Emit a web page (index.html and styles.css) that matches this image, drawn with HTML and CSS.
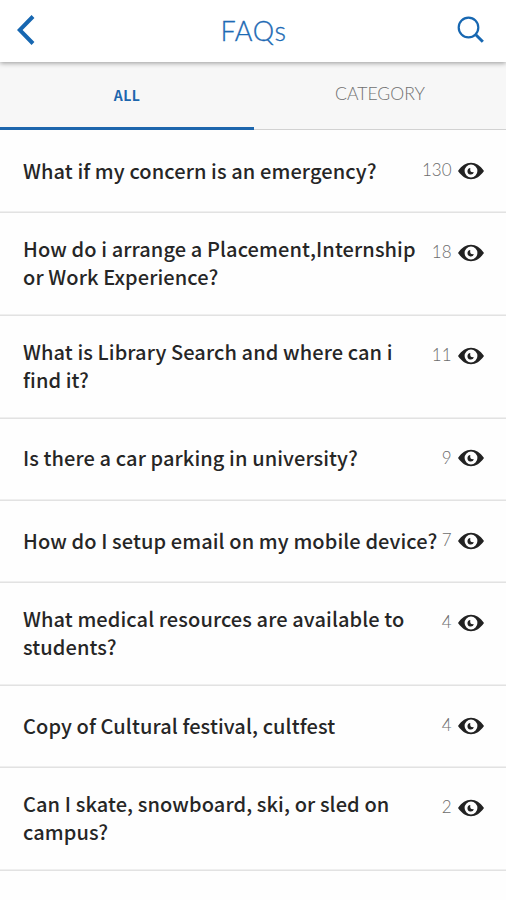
FILE: index.html
```
<!DOCTYPE html>
<html lang="en">
<head>
<meta charset="utf-8">
<title>FAQs</title>
<link rel="stylesheet" href="styles.css">
</head>
<body>
<svg class="defs" aria-hidden="true"><symbol id="eye" viewBox="0 0 26 18"><path fill-rule="evenodd" d="M0 9C4 3.500 8 .8 13 .8S22 3.500 26 9C22 14.500 18 17.200 13 17.200S4 14.500 0 9ZM13 2.600a6.400 6.400 0 1 0 0 12.800a6.400 6.400 0 1 0 0-12.800Z"/><path d="M12.300 5.900a3.300 3.300 0 1 0 3.600 4.300q-2.500.2-3.200-.7q-.8-1.200-.4-3.600Z"/></symbol></svg>
<header class="bar">
<svg class="back" viewBox="0 0 18 30"><path d="M16 1.500 2.700 15 16 28.500"/></svg>
<h1>FAQs</h1>
<svg class="search" viewBox="0 0 28 28"><circle cx="11.500" cy="11.500" r="9.800"/><path class="handle" d="m18.800 18.800 7 7"/></svg>
</header>
<nav class="tabs"><div class="tab active"><span>ALL</span></div><div class="tab"><span>CATEGORY</span></div></nav>
<main>
<div class="row"><p>What if my concern is an emergency?</p><div class="views"><span>130</span><svg><use href="#eye"/></svg></div></div>
<div class="row double"><p>How do i arrange a Placement,Internship<br>or Work Experience?</p><div class="views"><span>18</span><svg><use href="#eye"/></svg></div></div>
<div class="row double"><p>What is Library Search and where can i<br>find it?</p><div class="views"><span>11</span><svg><use href="#eye"/></svg></div></div>
<div class="row"><p>Is there a car parking in university?</p><div class="views"><span>9</span><svg><use href="#eye"/></svg></div></div>
<div class="row"><p>How do I setup email on my mobile device?</p><div class="views"><span>7</span><svg><use href="#eye"/></svg></div></div>
<div class="row double"><p>What medical resources are available to<br>students?</p><div class="views"><span>4</span><svg><use href="#eye"/></svg></div></div>
<div class="row"><p>Copy of Cultural festival, cultfest</p><div class="views"><span>4</span><svg><use href="#eye"/></svg></div></div>
<div class="row double"><p>Can I skate, snowboard, ski, or sled on<br>campus?</p><div class="views"><span>2</span><svg><use href="#eye"/></svg></div></div>
</main>
</body>
</html>
```
FILE: styles.css
```
* { box-sizing: border-box; }
body { margin: 0; height: 900px; overflow: hidden; background: #fefefe; color: #262626; font-family: "Noto Sans CJK SC", "Noto Sans", sans-serif; }
.defs { display: none; }
.bar { position: relative; display: flex; align-items: center; justify-content: space-between; height: 62px; padding: 0 21px 2px 17px; background: #fff; box-shadow: 0 1px 5px rgba(0,0,0,.4); z-index: 1; }
.bar svg { fill: none; stroke: #1767b1; }
.back { width: 18px; height: 30px; stroke-width: 4; }
.search { width: 28px; height: 28px; stroke-width: 2.200; }
.handle { stroke-width: 3; }
h1 { margin: 0 0 0 15px; padding-top: 1px; color: #1d6ab4; font: 300 27px/60px Lato, sans-serif; letter-spacing: .6px; -webkit-text-stroke: .3px #1d6ab4; }
.tabs { display: grid; grid-template-columns: 254px 1fr; height: 68px; background: #f7f7f7; }
.tab { display: flex; justify-content: center; align-items: center; border-bottom: 1px solid #d2d2d2; color: #707070; font: 300 17.600px Lato, sans-serif; padding-bottom: 4px; }
.active { border-bottom: 3px solid #1d66ad; color: #1d66ad; font: 700 14px "Noto Sans CJK SC", sans-serif; letter-spacing: .5px; padding: 1px 0 0; }
.row { display: flex; align-items: center; justify-content: space-between; height: 82.250px; padding: 0 22.500px 1px 23px; box-shadow: inset 0 -1px #efefef, 0 1px #e2e2e2; }
.double { height: 102.750px; }
p { margin: 0; font-size: 20px; font-weight: 500; line-height: 28px; white-space: nowrap; letter-spacing: .1px; }
.views { display: flex; align-items: center; align-self: flex-start; height: 81px; gap: 6px; color: #6c6c6c; font: 300 17px Lato, sans-serif; }
.views span { line-height: 20px; padding-bottom: 1px; }
.views svg { width: 26px; height: 18px; fill: #222; }
```
